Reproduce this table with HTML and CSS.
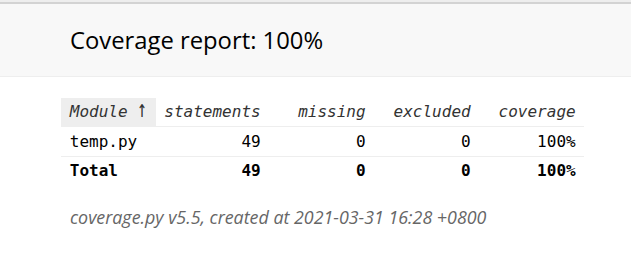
FILE: index.html
```html
<!DOCTYPE html>
<html>
<head>
<meta charset="utf-8">
<title>Coverage report</title>
<link rel="stylesheet" href="styles.css">
</head>
<body class="indexfile">
<div class="chrome"></div>
<div class="header">
  <div class="content">
    <h1>Coverage report: <span class="pc_cov">100%</span></h1>
  </div>
</div>
<div class="index">
  <table class="cov-table">
    <thead>
      <tr>
        <th class="name sorted">Module <span class="arrow">↑</span></th>
        <th>statements</th>
        <th>missing</th>
        <th>excluded</th>
        <th>coverage</th>
      </tr>
    </thead>
    <tbody>
      <tr class="file">
        <td class="name">temp.py</td>
        <td>49</td>
        <td>0</td>
        <td>0</td>
        <td>100%</td>
      </tr>
      <tr class="total">
        <td class="name">Total</td>
        <td>49</td>
        <td>0</td>
        <td>0</td>
        <td>100%</td>
      </tr>
    </tbody>
  </table>
</div>
<div class="footer">
  <p>coverage.py v5.5, created at 2021-03-31 16:28 +0800</p>
</div>
</body>
</html>
```
FILE: styles.css
```css
html, body, h1, p, table, td, th {
  margin: 0;
  padding: 0;
  border: 0;
  font-weight: inherit;
  font-style: inherit;
  font-size: 100%;
  font-family: inherit;
}

body {
  font-family: "Open Sans", "Noto Sans", sans-serif;
  font-size: 20px;
  color: #000;
  background: #fff;
}

.chrome {
  height: 2px;
  background: #eeeeee;
  border-bottom: 2px solid #d3d3d3;
}

.header {
  background: #f8f8f8;
  border-bottom: 1px solid #eee;
}

.header .content {
  padding: 20px 70px;
}

h1 {
  font-size: 23.8px;
  line-height: 32px;
  display: inline-block;
  color: #000;
}

.index {
  margin: 21px 0 0 61px;
}

.cov-table {
  border-collapse: collapse;
  font-family: "DejaVu Sans Mono", "Liberation Mono", monospace;
  font-size: 16px;
}

.cov-table td,
.cov-table th {
  text-align: right;
  width: 87.5px;
  padding: 4.4px 8.75px 4.4px 8.75px;
  line-height: 19.5px;
  border-bottom: 1px solid #eee;
  white-space: nowrap;
}

.cov-table td.name,
.cov-table th.name {
  text-align: left;
  width: auto;
}

.cov-table th {
  font-style: italic;
  color: #333;
  font-weight: normal;
}

.cov-table th.sorted {
  background: #eee;
}

.cov-table th .arrow {
  font-family: "DejaVu Sans Mono", monospace;
  font-style: normal;
  font-size: 16px;
  display: inline-block;
  width: 9.63px;
  text-align: center;
  color: #333;
  transform: scale(1, 1.5);
  transform-origin: 50% 80%;
}

.cov-table tr.total td {
  font-weight: bold;
  border-top: 1px solid #ccc;
  border-bottom: none;
}

.footer {
  margin: 20px 70px;
}

.footer p {
  color: #666;
  font-style: italic;
  font-size: 17.85px;
  line-height: 24.5px;
}
```
